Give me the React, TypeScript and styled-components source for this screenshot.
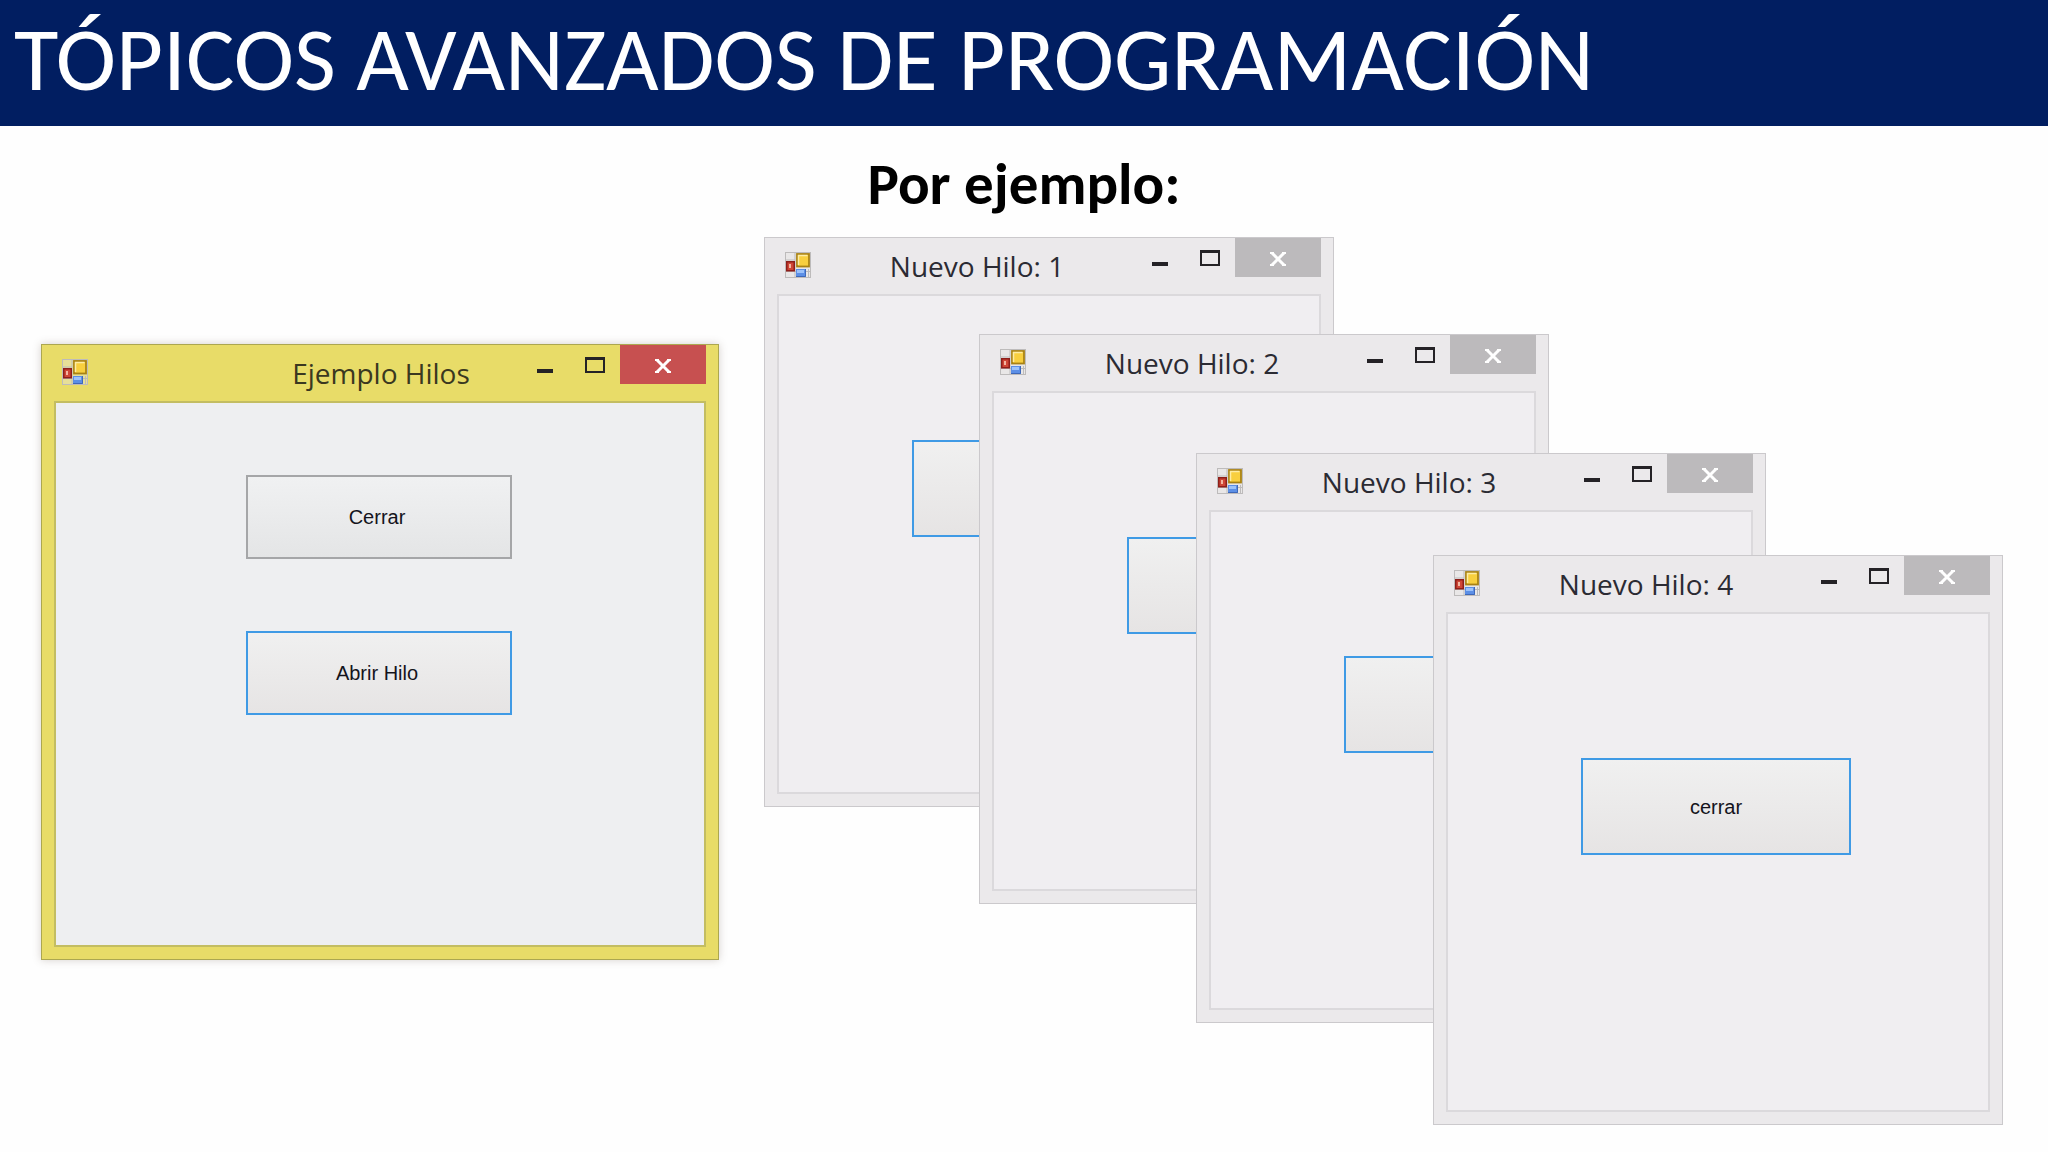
import React from "react";
import styled, { createGlobalStyle, css } from "styled-components";

const GlobalStyle = createGlobalStyle`
  *, *::before, *::after { box-sizing: border-box; }
  body { margin: 0; background: #fefefe; }
`;

const Slide = styled.main`
  display: flex;
  flex-direction: column;
  min-height: 100vh;
  overflow: hidden;
  font-family: Carlito, Lato, sans-serif;
`;

const Banner = styled.header`
  display: flex;
  align-items: center;
  height: 126px;
  padding: 0 14px 8px;
  background: #011e61;
`;

const BannerTitle = styled.h1`
  margin: 0;
  color: #fff;
  font-size: 91px;
  font-weight: 400;
  line-height: 100px;
  white-space: nowrap;
`;

const Subtitle = styled.h2`
  margin: 0;
  padding: 26px 0 2px;
  color: #000;
  font-size: 59px;
  font-weight: 700;
  line-height: 64px;
  text-align: center;
`;

const Desktop = styled.section`
  position: relative;
  flex: 1;
`;

type Tone = "active" | "idle";

const tones = {
  active: css`
    --frame: #e8dc68;
    --edge: #aca750;
    --rim: #c3bd62;
    --client: #eeeff1;
    --close: #c75050;
    box-shadow: 0 0 8px rgba(90, 70, 60, 0.25);
  `,
  idle: css`
    --frame: #ebe9eb;
    --edge: #cbc9cc;
    --rim: #dbd9dc;
    --client: #f0eef1;
    --close: #bcbabc;
  `,
};

const Frame = styled.article<{ $tone: Tone; $x: number; $y: number; $w: number; $h: number }>`
  ${({ $tone }) => tones[$tone]}
  position: absolute;
  left: ${({ $x }) => $x}px;
  top: ${({ $y }) => $y}px;
  width: ${({ $w }) => $w}px;
  height: ${({ $h }) => $h}px;
  display: flex;
  flex-direction: column;
  padding: 0 12px 12px;
  border: 1px solid var(--edge);
  background: var(--frame);
`;

const TitleBar = styled.header`
  display: flex;
  align-items: flex-start;
  height: 56px;
  padding-left: 8px;
`;

const AppIcon = styled.svg`
  flex: none;
  width: 26px;
  height: 26px;
  margin-top: 14px;
`;

const Caption = styled.h3<{ $tone: Tone }>`
  flex: 1;
  margin: 0;
  padding: 8px 0 0 ${({ $tone }) => ($tone === "active" ? 154 : 8)}px;
  color: ${({ $tone }) => ($tone === "active" ? "#3a3820" : "#2b2b33")};
  font-family: "Open Sans", "Noto Sans", sans-serif;
  font-size: 28px;
  font-weight: 400;
  line-height: 40px;
  text-align: center;
  white-space: nowrap;
`;

const Controls = styled.div`
  display: flex;
  flex: none;
`;

const ControlButton = styled.button<{ $close?: boolean }>`
  width: ${({ $close }) => ($close ? 86 : 50)}px;
  height: 39px;
  padding: 0;
  border: 0;
  background: ${({ $close }) => ($close ? "var(--close)" : "transparent")};
  color: ${({ $close }) => ($close ? "#fff" : "#242226")};

  svg {
    display: block;
    margin: 0 auto;
  }
`;

const Client = styled.div<{ $tone: Tone }>`
  display: flex;
  flex: 1;
  flex-direction: column;
  align-items: center;
  gap: 72px;
  padding: ${({ $tone }) => ($tone === "active" ? "72px 2px 0 0" : "144px 4px 0 0")};
  border: 2px solid var(--rim);
  background: var(--client);
`;

const PushButton = styled.button<{ $focused?: boolean; $tall?: boolean }>`
  width: ${({ $tall }) => ($tall ? 270 : 266)}px;
  height: ${({ $tall }) => ($tall ? 97 : 84)}px;
  padding: ${({ $tall }) => ($tall ? "2px 0 0" : "0 4px 0 0")};
  border: 2px solid ${({ $focused }) => ($focused ? "#3f9ae5" : "#a5a6a8")};
  background: ${({ $focused }) =>
    $focused ? "linear-gradient(#f0f0f0, #e6e4e4)" : "linear-gradient(#f0f1f2, #e4e5e6)"};
  color: #14141c;
  font-family: "Liberation Sans", Arial, sans-serif;
  font-size: 20px;
`;

function FormIcon() {
  return (
    <AppIcon viewBox="0 0 26 26" aria-hidden="true">
      <rect x="0.5" y="0.5" width="25" height="25" fill="#e6e3e0" fillOpacity="0.4" stroke="#bdbbbb" />
      <path d="M10 1v24M1 8h9M1 19.500h24M23.500 17v8" stroke="#bdbbbb" fill="none" />
      <rect x="1.750" y="9.750" width="7.500" height="9" fill="#cf4636" stroke="#8e1f1a" strokeWidth="1.500" />
      <rect x="4" y="12" width="2" height="4" fill="#f3b5a0" />
      <rect x="12" y="2" width="12" height="12.500" fill="#f8cf3e" stroke="#a98213" strokeWidth="1.800" />
      <path d="M13.500 13V3.500h9" stroke="#fdeca4" strokeWidth="1.500" fill="none" />
      <rect x="11" y="17" width="10" height="8" fill="#5c8fe6" />
      <rect x="12" y="18" width="7" height="3" fill="#9cc2fa" />
      <path d="M11 24.500h9.500V17" stroke="#3f68b8" fill="none" />
    </AppIcon>
  );
}

interface WindowProps {
  title: string;
  tone: Tone;
  x: number;
  y: number;
  w: number;
  h: number;
  children: React.ReactNode;
}

function FormWindow({ title, tone, x, y, w, h, children }: WindowProps) {
  return (
    <Frame $tone={tone} $x={x} $y={y} $w={w} $h={h}>
      <TitleBar>
        <FormIcon />
        <Caption $tone={tone}>{title}</Caption>
        <Controls>
          <ControlButton aria-label="Minimizar">
            <svg width="16" height="39" viewBox="0 0 16 39">
              <path d="M0 26h16" stroke="currentColor" strokeWidth="4" />
            </svg>
          </ControlButton>
          <ControlButton aria-label="Maximizar">
            <svg width="20" height="39" viewBox="0 0 20 39">
              <path d="M1 13v14h18V13" fill="none" stroke="currentColor" strokeWidth="2" />
              <path d="M0 13.500h20" stroke="currentColor" strokeWidth="3" />
            </svg>
          </ControlButton>
          <ControlButton $close aria-label="Cerrar ventana">
            <svg width="16" height="39" viewBox="0 0 16 39">
              <path d="M2 15L14 27M14 15L2 27" stroke="currentColor" strokeWidth="3" />
              <path d="M0 15h4M12 15h4M0 27h4M12 27h4" stroke="currentColor" strokeWidth="2" />
            </svg>
          </ControlButton>
        </Controls>
      </TitleBar>
      <Client $tone={tone}>{children}</Client>
    </Frame>
  );
}

const threads = [
  { id: 1, x: 764, y: 19 },
  { id: 2, x: 979, y: 116 },
  { id: 3, x: 1196, y: 235 },
  { id: 4, x: 1433, y: 337 },
];

export default function App() {
  return (
    <Slide>
      <GlobalStyle />
      <Banner>
        <BannerTitle>TÓPICOS AVANZADOS DE PROGRAMACIÓN</BannerTitle>
      </Banner>
      <Subtitle>Por ejemplo:</Subtitle>
      <Desktop>
        <FormWindow title="Ejemplo Hilos" tone="active" x={41} y={126} w={678} h={616}>
          <PushButton>Cerrar</PushButton>
          <PushButton $focused>Abrir Hilo</PushButton>
        </FormWindow>
        {threads.map(({ id, x, y }) => (
          <FormWindow key={id} title={`Nuevo Hilo: ${id}`} tone="idle" x={x} y={y} w={570} h={570}>
            <PushButton $focused $tall>
              cerrar
            </PushButton>
          </FormWindow>
        ))}
      </Desktop>
    </Slide>
  );
}
